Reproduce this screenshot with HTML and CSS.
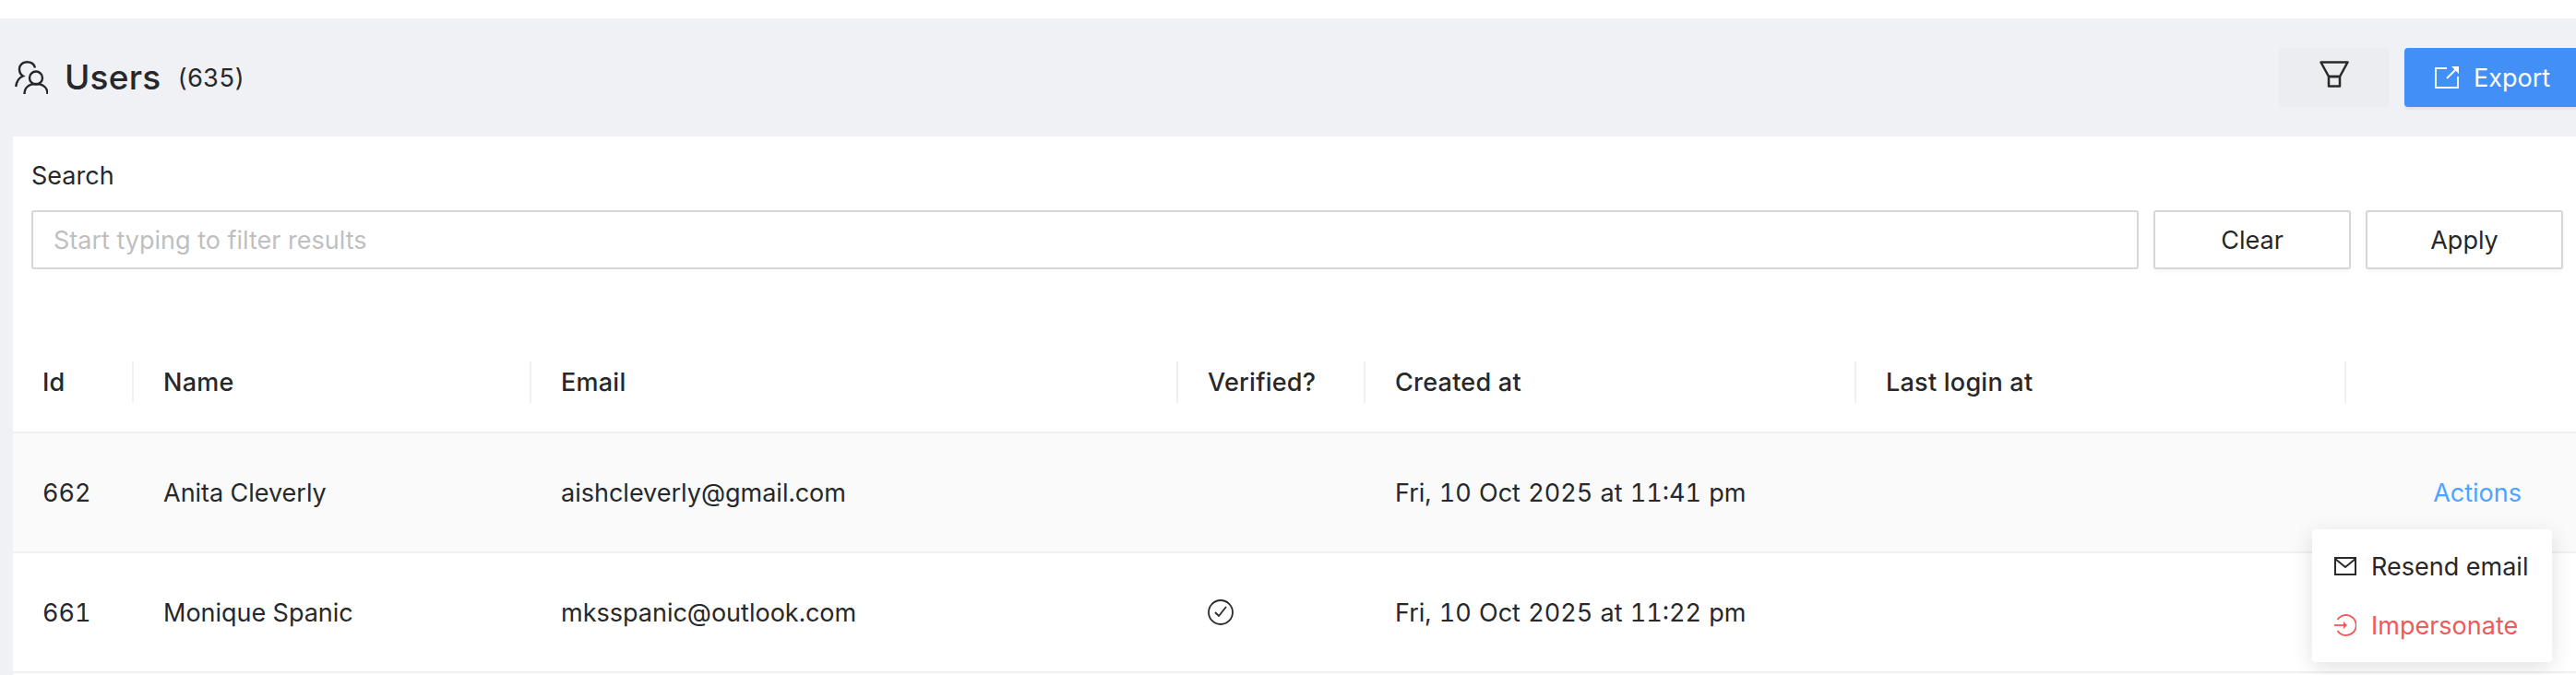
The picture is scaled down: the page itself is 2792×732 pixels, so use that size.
FILE: index.html
```html
<!DOCTYPE html>
<html lang="en">
<head>
  <meta charset="UTF-8" />
  <title>Users</title>
  <link rel="stylesheet" href="styles.css">
</head>
<body>
  <div class="page">
    <header class="page-head">
      <div class="title-wrap">
        <svg class="users-icon" viewBox="0 0 36 36" fill="none" stroke="#23262b" stroke-width="2.400">
          <circle cx="23" cy="18.500" r="7"/>
          <path d="M10.500 36c0-7 5-11 12.500-11s12.500 4 12.500 11"/>
          <path d="M22 7.500C21 3 17 1.200 13 1.200 8 1.200 5 5 5 9c0 3 1.500 6 4 7.500C5 18 2 22 1.200 28"/>
        </svg>
        <h1 class="title">Users</h1>
        <span class="count">(635)</span>
      </div>
      <div class="head-actions">
        <button class="btn-filter">
          <svg width="32" height="29" viewBox="0 0 32 29" fill="none" stroke="#2a2a2a" stroke-width="2.500" stroke-linejoin="round">
            <path d="M1.500 1.500h29L22 17H10z"/>
            <path d="M10 17h12v10.500H10z"/>
          </svg>
        </button>
        <button class="btn-export">
          <svg width="26" height="24" viewBox="0 0 26 24" fill="none" stroke="#fff" stroke-width="1.800">
            <path d="M13 2H1v21h24V11"/>
            <path d="M13 13 23 3"/>
            <path d="M18 0h8v8z" stroke="none" fill="#fff"/>
          </svg>
          Export
        </button>
      </div>
    </header>

    <main class="panel">
      <form class="search">
        <label class="search-label" for="q">Search</label>
        <div class="search-row">
          <input id="q" class="search-input" type="text" placeholder="Start typing to filter results" />
          <button type="button" class="btn-line">Clear</button>
          <button type="button" class="btn-line">Apply</button>
        </div>
      </form>

      <table class="users">
        <thead>
          <tr>
            <th class="c-id"><span>Id</span></th>
            <th class="c-name"><span>Name</span></th>
            <th class="c-email"><span>Email</span></th>
            <th class="c-ver"><span>Verified?</span></th>
            <th class="c-created"><span>Created at</span></th>
            <th class="c-login"><span>Last login at</span></th>
            <th class="c-act"></th>
          </tr>
        </thead>
        <tbody>
          <tr class="hovered">
            <td class="c-id">662</td>
            <td class="c-name">Anita Cleverly</td>
            <td class="c-email">aishcleverly@gmail.com</td>
            <td class="c-ver"></td>
            <td class="c-created">Fri, 10 Oct 2025 at 11:41 pm</td>
            <td class="c-login"></td>
            <td class="c-act"><a class="actions-link">Actions</a></td>
          </tr>
          <tr>
            <td class="c-id">661</td>
            <td class="c-name">Monique Spanic</td>
            <td class="c-email">mksspanic@outlook.com</td>
            <td class="c-ver">
              <svg class="check" viewBox="0 0 28 28" fill="none" stroke="#2a2a2a" stroke-width="1.800">
                <circle cx="14" cy="14" r="13"/>
                <path d="M8 14l4 4 8-10"/>
              </svg>
            </td>
            <td class="c-created">Fri, 10 Oct 2025 at 11:22 pm</td>
            <td class="c-login"></td>
            <td class="c-act"></td>
          </tr>
        </tbody>
      </table>

      <div class="menu">
        <div class="menu-item">
          <svg width="24" height="20" viewBox="0 0 24 20" fill="none" stroke="#2a2a2a" stroke-width="2">
            <path d="M1 1h22v18H1z"/>
            <path d="M1 2l11 9 11-9"/>
          </svg>
          Resend email
        </div>
        <div class="menu-item danger">
          <svg width="24" height="24" viewBox="0 0 24 24" fill="none" stroke="#ee5a5a" stroke-width="1.800">
            <path d="M3.500 6A11 11 0 1 1 3.500 18"/>
            <path d="M0 12h13"/>
            <path d="M10 8l4 4-4 4" fill="#ee5a5a" stroke="none"/>
          </svg>
          Impersonate
        </div>
      </div>
    </main>
  </div>
</body>
</html>
```

FILE: styles.css
```css
* {
  box-sizing: border-box;
}
html, body {
  margin: 0;
  height: 100%;
  overflow: hidden;
}
body {
  font-family: 'Inter', sans-serif;
  font-size: 27px;
  color: #26282b;
  background: #fff;
  padding-top: 20px;
}
.page {
  background: #f0f1f5;
  height: 712px;
}
.page-head {
  height: 128px;
  display: flex;
  align-items: center;
  justify-content: space-between;
  padding-left: 16px;
}
.title-wrap {
  display: flex;
  align-items: center;
}
.users-icon {
  width: 36px;
  height: 36px;
  margin-right: 18px;
}
.title {
  margin: 0 18px 0 0;
  font-size: 37px;
  font-weight: 450;
  letter-spacing: .2px;
  line-height: 44px;
}
.count {
  font-variant-numeric: tabular-nums;
  letter-spacing: -.2px;
}
.head-actions {
  display: flex;
  gap: 16px;
  height: 64px;
}
.head-actions button {
  border: none;
  font-family: inherit;
  font-size: 27px;
}
.btn-filter {
  width: 120px;
  background: #ecedf1;
  border-radius: 4px;
  padding: 0 0 7px;
  display: flex;
  align-items: center;
  justify-content: center;
}
.btn-export {
  width: 186px;
  background: #4290f7;
  color: #fff;
  border-radius: 4px 0 0 4px;
  display: flex;
  align-items: center;
  gap: 16px;
  padding: 0 0 0 33px;
  box-shadow: 0 3px 1px rgba(0, 0, 0, .05);
}
.panel {
  position: relative;
  margin-left: 14px;
  background: #fff;
  height: 584px;
  padding-top: 24px;
}
.search {
  padding: 0 14px 0 20px;
  height: 196px;
}
.search-label {
  display: block;
  line-height: 38px;
  margin-bottom: 18px;
}
.search-row {
  display: flex;
  gap: 16px;
  height: 64px;
}
.search-input {
  flex: 1;
  border: 2px solid #d6d6d6;
  border-radius: 3px;
  padding: 0 22px;
  font-family: inherit;
  font-size: 27px;
}
.search-input::placeholder {
  color: #bfbfbf;
}
.btn-line {
  width: 214px;
  background: #fff;
  border: 2px solid #d6d6d6;
  border-radius: 3px;
  font-family: inherit;
  font-size: 27px;
  color: #26282b;
  box-shadow: 0 3px 4px rgba(0, 0, 0, .03);
}
.users {
  width: 100%;
  table-layout: fixed;
  border-collapse: separate;
  border-spacing: 0;
}
.users th {
  height: 102px;
  padding: 24px 0 0;
  vertical-align: top;
  text-align: left;
  font-weight: 450;
  letter-spacing: .25px;
  border-bottom: 2px solid #f0f0f0;
}
.users th span {
  display: block;
  height: 45px;
  line-height: 45px;
  padding-left: 32px;
  border-right: 2px solid #f0f0f0;
}
.users td {
  height: 130px;
  padding: 0 0 0 32px;
  border-bottom: 2px solid #f0f0f0;
  font-variant-numeric: tabular-nums;
}
.c-id { width: 131px; }
.c-name { width: 431px; }
.c-email { width: 701px; }
.c-ver { width: 203px; }
.c-created { width: 532px; }
.c-login { width: 531px; }
.users td.c-created {
  word-spacing: 1px;
}
.hovered td {
  background: #fafafa;
}
.users td.c-act {
  text-align: right;
  padding-right: 59px;
}
.actions-link {
  color: #4da3ff;
}
.check {
  display: block;
  width: 28px;
  height: 28px;
}
.menu {
  position: absolute;
  right: 26px;
  top: 426px;
  width: 260px;
  height: 144px;
  padding: 8px 0;
  background: #fff;
  border-radius: 4px;
  box-shadow: 0 6px 24px rgba(0, 0, 0, .12);
}
.menu-item {
  display: flex;
  align-items: center;
  gap: 16px;
  height: 64px;
  padding-left: 24px;
}
.danger {
  color: #ee5a5a;
}
```
